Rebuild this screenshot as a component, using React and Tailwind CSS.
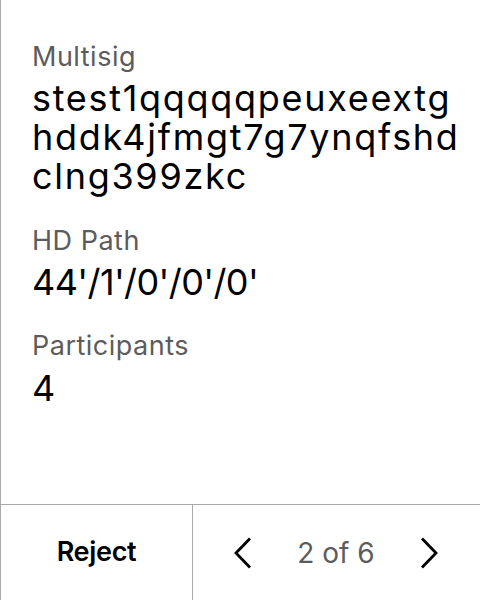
export default function App() {
  return (
    <div className="w-[480px] h-[600px] flex flex-col bg-white border-l border-[#aaaaaa] text-black" style={{ fontFamily: "Inter, 'Noto Sans', sans-serif" }}>
      <div className="flex-1 pl-[31px] pr-[18px] pt-[41px]">
        <div className="text-[27px] leading-[32px] tracking-[0.5px] text-[#5c5c5c]">Multisig</div>
        <div className="text-[36px] leading-[39px] tracking-[1.7px] mt-[6px] break-all">stest1qqqqqpeuxeextghddk4jfmgt7g7ynqfshdclng399zkc</div>
        <div className="text-[27px] leading-[32px] tracking-[0.5px] text-[#5c5c5c] mt-[29px]">HD Path</div>
        <div className="text-[36px] leading-[39px] tracking-[-0.6px] mt-[6px]">44'/1'/0'/0'/0'</div>
        <div className="text-[27px] leading-[32px] tracking-[0.5px] text-[#5c5c5c] mt-[28px]">Participants</div>
        <div className="text-[36px] leading-[39px] mt-[7px]">4</div>
      </div>
      <div className="h-[96px] border-t border-[#aaaaaa] flex">
        <div className="w-[192px] border-r border-[#aaaaaa] flex items-center justify-center text-[27px] font-semibold tracking-[-0.3px]">Reject</div>
        <div className="flex-1 flex items-center justify-between pl-[41px] pr-[42px]">
          <svg width="18" height="32" viewBox="0 0 18 32" fill="none" stroke="black" strokeWidth="2.8"><path d="M16 1.5 L2 16 L16 30.5" /></svg>
          <span className="text-[28px] text-[#5c5c5c]">2 of 6</span>
          <svg width="18" height="32" viewBox="0 0 18 32" fill="none" stroke="black" strokeWidth="2.8"><path d="M2 1.5 L16 16 L2 30.5" /></svg>
        </div>
      </div>
    </div>
  );
}
